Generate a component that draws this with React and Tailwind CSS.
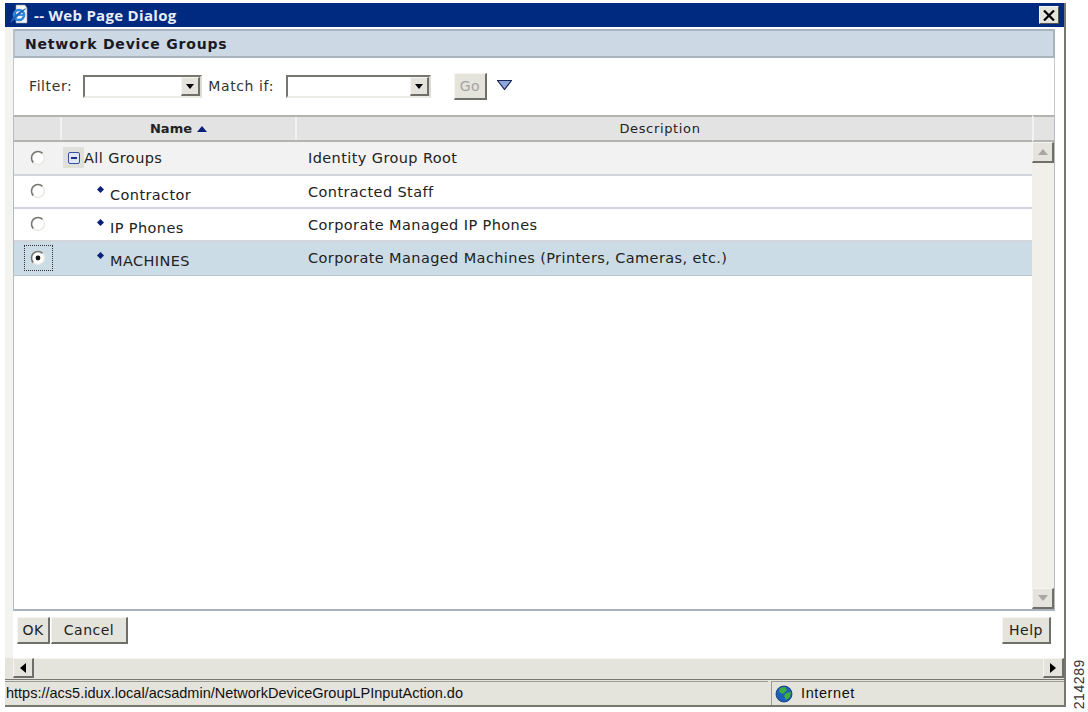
import React from 'react';

const ui = { fontFamily: '"DejaVu Sans", Verdana, sans-serif' };

const raised =
  'bg-[#e4e3dc] border-t border-l border-t-[#f4f4f0] border-l-[#f4f4f0] border-b-2 border-r-2 border-b-[#6f6f6a] border-r-[#6f6f6a]';

function Radio({ checked }) {
  return (
    <svg width="16" height="16" viewBox="0 0 16 16" className="block">
      <circle cx="8" cy="8" r="6.5" fill="#fff" />
      <path d="M3.4 12.6A6.5 6.5 0 0 1 12.6 3.4" fill="none" stroke="#77776f" strokeWidth="1.6" />
      <path d="M12.6 3.4A6.5 6.5 0 0 1 3.4 12.6" fill="none" stroke="#e8e8e2" strokeWidth="1.4" />
      {checked && <circle cx="8" cy="8" r="2.4" fill="#111" />}
    </svg>
  );
}

function Diamond() {
  return (
    <svg width="7" height="7" viewBox="0 0 7 7" className="block">
      <path d="M3.5 0L7 3.5L3.5 7L0 3.5Z" fill="#0a1f78" />
    </svg>
  );
}

function Combo({ width }) {
  return (
    <div
      className={`flex h-[23px] items-center justify-end bg-white border-2 border-t-[#77776f] border-l-[#77776f] border-b-[#ecebe4] border-r-[#dcdbd4] ${width}`}
    >
      <div className={`flex h-[19px] w-[19px] items-center justify-center ${raised}`}>
        <svg width="8" height="5" viewBox="0 0 8 5">
          <path d="M0 0H8L4 5Z" fill="#000" />
        </svg>
      </div>
    </div>
  );
}

function Btn({ children, className = '' }) {
  return (
    <button className={`flex h-[27px] items-center justify-center text-[14px] tracking-[0.5px] text-[#222] ${raised} ${className}`}>
      {children}
    </button>
  );
}

function Row({ height, bg, name, desc, checked, root, border }) {
  return (
    <div className={`flex ${height} ${bg} ${border} text-[14.5px] tracking-[0.4px]`}>
      <div className={`flex w-[49px] shrink-0 items-start justify-center pr-[1px] ${root ? 'pt-[8px]' : 'pt-[7px]'}`}>
        {checked ? (
          <div className="flex h-[26px] w-[29px] -mt-[4px] items-center justify-center border border-dotted border-[#333]">
            <Radio checked />
          </div>
        ) : (
          <Radio />
        )}
      </div>
      {root ? (
        <div className="flex w-[245px] shrink-0 items-start pt-[5px]">
          <div className="flex h-[21px] w-[21px] items-center justify-center bg-[#e0e0da]">
            <div className="flex h-[12px] w-[12px] items-center justify-center rounded-[2px] border border-[#3a4fa0] bg-[#dfe6f5]">
              <div className="h-[2px] w-[6px] bg-[#1c2f86]" />
            </div>
          </div>
          <span className="leading-[23px] text-[#222]">{name}</span>
        </div>
      ) : (
        <div className="flex w-[245px] shrink-0 items-start pl-[34px] pt-[6px]">
          <div className="mt-[4px]">
            <Diamond />
          </div>
          <span className="ml-[6px] mt-[2px] leading-[23px] text-[#222]">{name}</span>
        </div>
      )}
      <div className="pt-[5px] leading-[23px] text-[#222]">{desc}</div>
    </div>
  );
}

export default function App() {
  return (
    <div className="relative flex h-[712px] w-[1088px] overflow-hidden bg-white" style={ui}>
      {/* Dialog window */}
      <div className="ml-[5px] mt-[3px] flex h-[704px] w-[1061px] flex-col border-r-2 border-b-2 border-r-[#77776f] border-b-[#77776f]">
        {/* Title bar */}
        <div className="flex h-[24px] shrink-0 items-center bg-[#002a7f] pr-[5px]">
          <svg width="22" height="22" viewBox="0 0 22 22" className="ml-[3px] shrink-0">
            <path d="M8 1H17L19 4V19H8Z" fill="#f6f6f6" stroke="#9a9a9a" strokeWidth="0.6" />
            <circle cx="11" cy="11" r="5" fill="none" stroke="#2f86e0" strokeWidth="2.6" />
            <path d="M6 11H16" stroke="#2f86e0" strokeWidth="1.8" />
            <path d="M2 19C3 14 12 6 19 4C15 7 7 16 2 19Z" fill="#1f66bf" />
          </svg>
          <span className="ml-[4px] font-['Open_Sans',sans-serif] text-[15px] font-bold tracking-[0.3px] text-[#e9edf7]">-- Web Page Dialog</span>
          <div className="ml-auto flex h-[18px] w-[20px] items-center justify-center bg-[#e4e3dc] border border-[#f4f4f0] border-r-[#555] border-b-[#555]">
            <svg width="12" height="11" viewBox="0 0 12 11">
              <path d="M1 0.5L11 10.5M11 0.5L1 10.5" stroke="#000" strokeWidth="2.2" />
            </svg>
          </div>
        </div>

        {/* Page body */}
        <div className="flex min-h-0 flex-1 flex-col bg-white">
          <div className="flex min-h-0 flex-1 flex-col border-l-[8px] border-l-[#f3f3ef] pr-[9px] pt-[2px]">
            {/* Panel heading */}
            <div className="flex h-[29px] shrink-0 items-center border-2 border-[#a9b3bd] border-l-[#b8c0c8] bg-[#cdd8e5] pl-[10px] pt-[1px] text-[14px] font-bold tracking-[0.8px] text-[#1a1a24]">
              Network Device Groups
            </div>

            {/* Filter row */}
            <div className="flex h-[57px] shrink-0 items-center border-x border-[#c4c8cc] pl-[15px] text-[14px] tracking-[0.6px] text-[#333]">
              <span>Filter:</span>
              <Combo width="ml-[11px] w-[119px]" />
              <span className="ml-[6px]">Match if:</span>
              <Combo width="ml-[12px] w-[145px]" />
              <Btn className="ml-[23px] w-[33px] !text-[#a3a39c]">Go</Btn>
              <svg width="15" height="10" viewBox="0 0 15 10" className="mb-[3px] ml-[10px]">
                <path d="M0.5 0.5H14.5L7.5 9.5Z" fill="#8ea6d8" stroke="#1a2558" strokeWidth="1.2" />
              </svg>
            </div>

            {/* Grid */}
            <div className="flex min-h-0 flex-1 border-x border-b-2 border-x-[#b6bcc2] border-b-[#a9b3bd]">
              <div className="flex min-w-0 flex-1 flex-col">
                <div className="flex h-[27px] shrink-0 border-y-2 border-y-[#b3b3b0] bg-[#e3e3e3] text-[13px] text-[#222]">
                  <div className="w-[48px] shrink-0 border-r-2 border-r-[#f2f2f2]" />
                  <div className="flex w-[235px] shrink-0 items-center justify-center gap-[5px] border-r-2 border-r-[#f2f2f2] font-bold">
                    Name
                    <svg width="10" height="6" viewBox="0 0 10 6">
                      <path d="M0 6L5 0L10 6Z" fill="#0a1f78" />
                    </svg>
                  </div>
                  <div className="flex flex-1 items-center justify-center pr-[9px] tracking-[0.65px]">Description</div>
                </div>
                <Row height="h-[34px]" bg="bg-[#f2f2f2]" border="border-b-2 border-b-[#d2d6dc]" root name="All Groups" desc="Identity Group Root" />
                <Row height="h-[33px]" bg="bg-white" border="border-b-2 border-b-[#d2d6dc]" name="Contractor" desc="Contracted Staff" />
                <Row height="h-[33px]" bg="bg-white" border="border-b-2 border-b-[#d2d6dc]" name="IP Phones" desc="Corporate Managed IP Phones" />
                <Row height="h-[34px]" bg="bg-[#ccdce6]" border="border-b border-b-[#b9c6d0]" checked name="MACHINES" desc="Corporate Managed Machines (Printers, Cameras, etc.)" />
                <div className="flex-1 bg-white" />
              </div>

              {/* Vertical scrollbar */}
              <div className="flex w-[22px] shrink-0 flex-col">
                <div className="h-[27px] shrink-0 border-y-2 border-y-[#b3b3b0] border-l-2 border-l-[#f2f2f2] bg-[#e3e3e3]" />
                <div className="flex flex-1 flex-col bg-[#f0efe9]">
                  <div className={`flex h-[21px] items-center justify-center ${raised}`}>
                    <svg width="10" height="6" viewBox="0 0 10 6">
                      <path d="M0 6L5 0L10 6Z" fill="#a8a8a2" />
                    </svg>
                  </div>
                  <div className="flex-1" />
                  <div className={`flex h-[21px] items-center justify-center ${raised}`}>
                    <svg width="10" height="6" viewBox="0 0 10 6">
                      <path d="M0 0H10L5 6Z" fill="#a8a8a2" />
                    </svg>
                  </div>
                </div>
              </div>
            </div>

            {/* Dialog buttons */}
            <div className="flex h-[47px] shrink-0 items-start pl-[4px] pt-[6px]">
              <Btn className="w-[33px]">OK</Btn>
              <Btn className="ml-[1px] w-[77px]">Cancel</Btn>
              <Btn className="ml-auto mr-[4px] w-[49px]">Help</Btn>
            </div>
          </div>

          {/* Horizontal scrollbar */}
          <div className="flex h-[22px] shrink-0 bg-[#e4e3dc] pl-[8px] pb-[1px] border-b border-b-[#77776f]">
            <div className={`flex h-[20px] w-[21px] items-center justify-center ${raised}`}>
              <svg width="6" height="10" viewBox="0 0 6 10">
                <path d="M6 0V10L0 5Z" fill="#000" />
              </svg>
            </div>
            <div className="flex-1 bg-[#e4e3dc] border-t border-t-[#f4f4f0]" />
            <div className={`flex h-[20px] w-[21px] items-center justify-center ${raised}`}>
              <svg width="6" height="10" viewBox="0 0 6 10">
                <path d="M0 0V10L6 5Z" fill="#000" />
              </svg>
            </div>
          </div>

          {/* Status bar */}
          <div className="flex h-[25px] shrink-0 bg-[#e4e3dc] pt-[1px] font-['Liberation_Sans',sans-serif] text-[14.5px] text-[#111]">
            <div className="flex w-[763px] shrink-0 items-center border-t border-t-[#9c9b94] pl-[1px]">
              https://acs5.idux.local/acsadmin/NetworkDeviceGroupLPInputAction.do
            </div>
            <div className="ml-[3px] flex flex-1 items-center border-t border-l border-t-[#9c9b94] border-l-[#9c9b94] pl-[3px]">
              <svg width="18" height="18" viewBox="0 0 18 18" className="shrink-0">
                <circle cx="9" cy="9" r="8" fill="#1a5fb8" stroke="#0e3474" strokeWidth="0.8" />
                <path d="M5 3L10 2L12 5L8 9L4 7Z" fill="#3fae3a" />
                <path d="M11 8L16 7L15 12L11 15L9 11Z" fill="#3fae3a" />
              </svg>
              <span className="ml-[8px] tracking-[0.6px]">Internet</span>
            </div>
          </div>
        </div>
      </div>

      {/* Figure number running up the margin */}
      <div className="absolute bottom-[3px] left-[1071px] font-['Liberation_Sans',sans-serif] text-[14px] leading-[16px] tracking-[0.6px] text-[#333] [writing-mode:vertical-rl] rotate-180">
        214289
      </div>
    </div>
  );
}
